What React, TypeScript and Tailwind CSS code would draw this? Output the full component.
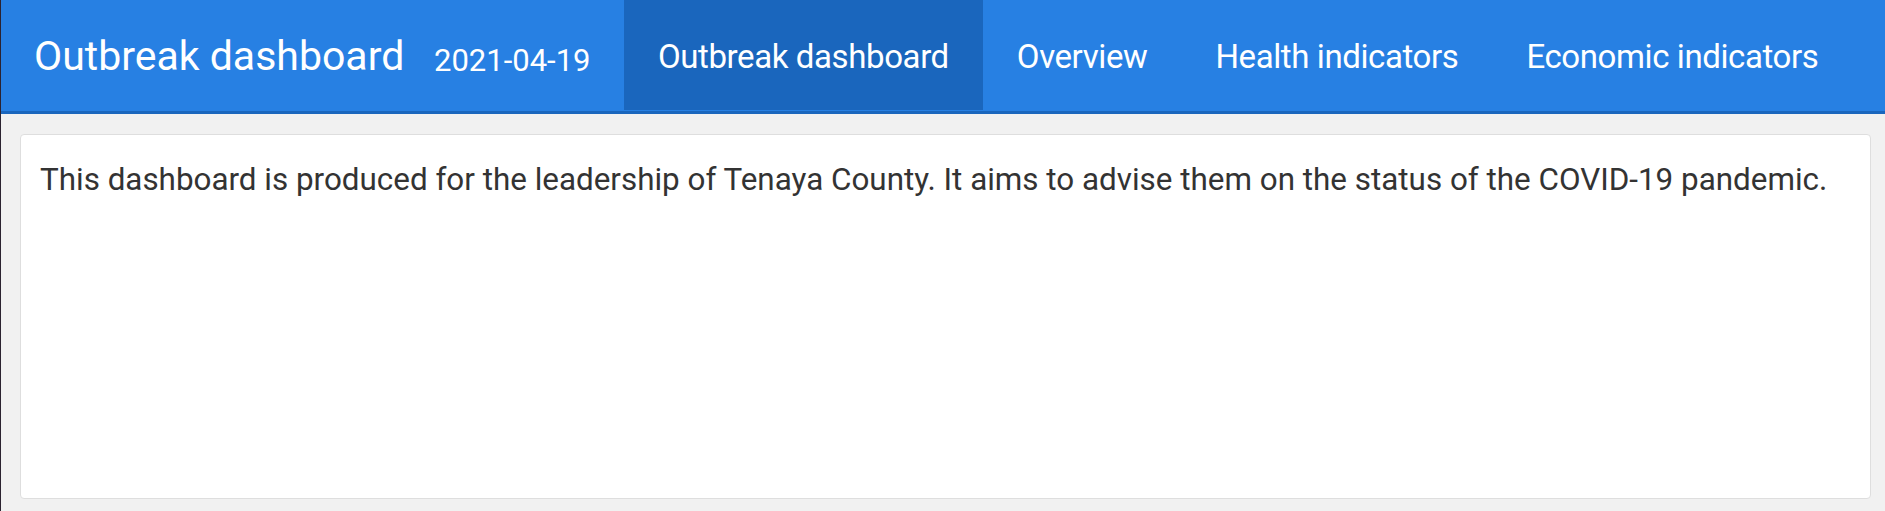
import React from "react";

const font = { fontFamily: 'Roboto, "Liberation Sans", sans-serif' };

export default function App() {
  const tabs = ["Outbreak dashboard", "Overview", "Health indicators", "Economic indicators"];
  return (
    <div
      className="w-[1885px] h-[511px] bg-[#f1f1f1] border-l border-[#2b2230] flex flex-col overflow-hidden"
      style={font}
    >
      <nav className="h-[114px] shrink-0 bg-[#2780e3] border-b-[3px] border-[#1a66bd] flex items-start text-white">
        <div className="h-[111px] w-[433px] shrink-0 flex items-center pl-[33px] pt-[1px] text-[41px] leading-none whitespace-nowrap">
          Outbreak dashboard
        </div>
        <div className="h-[111px] w-[190px] shrink-0 flex items-center pt-[9px] text-[31px] leading-none">
          2021-04-19
        </div>
        {tabs.map((t, i) => (
          <div
            key={t}
            className={
              i === 0
                ? "h-[110px] flex items-center px-[34px] pt-[2px] text-[33px] leading-none tracking-[-0.4px] whitespace-nowrap bg-[#1a66bd]"
                : "h-[110px] flex items-center px-[34px] pt-[2px] text-[33px] leading-none tracking-[-0.4px] whitespace-nowrap"
            }
          >
            {t}
          </div>
        ))}
      </nav>
      <div className="mt-[20px] ml-[19px] mr-[14px] h-[365px] bg-white border border-[#dedede] rounded-[4px] px-[19px] pt-[25px]">
        <p className="text-[31.4px] leading-[40px] text-[#333333] whitespace-nowrap">
          This dashboard is produced for the leadership of Tenaya County. It aims to advise them on the status of the COVID-19 pandemic.
        </p>
      </div>
    </div>
  );
}
